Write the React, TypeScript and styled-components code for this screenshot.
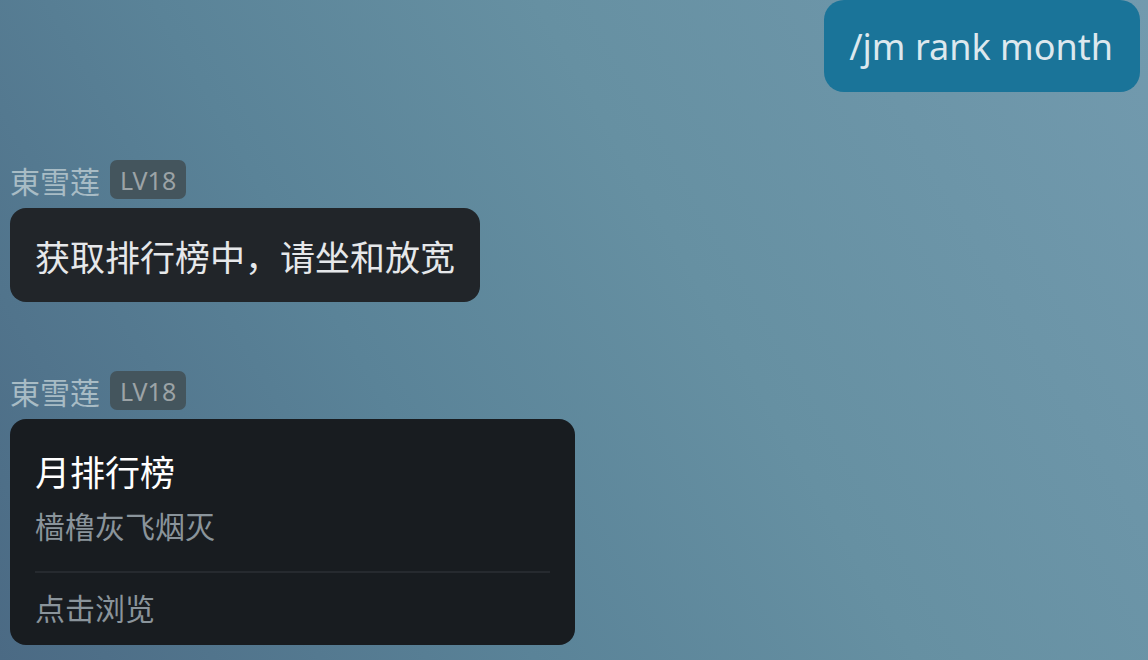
import React from "react";
import styled, { createGlobalStyle } from "styled-components";

const Global = createGlobalStyle`
  html, body { margin: 0; padding: 0; }
  body {
    width: 1148px;
    height: 660px;
    overflow: hidden;
    font-family: "Noto Sans", "Noto Sans CJK SC", sans-serif;
    background: linear-gradient(60deg, #4b6a84 0%, #5a8398 35%, #6690a2 60%, #729aae 100%);
  }
`;

const Page = styled.div`
  width: 1148px;
  height: 660px;
  display: flex;
  flex-direction: column;
  box-sizing: border-box;
  padding: 0 8px 0 10px;
`;

const OutRow = styled.div`
  display: flex;
  justify-content: flex-end;
`;

const OutBubble = styled.div`
  height: 92px;
  box-sizing: border-box;
  padding: 0 27px 0 25px;
  display: flex;
  align-items: center;
  background: #1a7499;
  color: #dde8ee;
  font-size: 36px;
  border-radius: 20px;
`;

const InGroup = styled.div<{ $top: number }>`
  display: flex;
  flex-direction: column;
  align-items: flex-start;
  gap: 9px;
  margin-top: ${(p) => p.$top}px;
`;

const NameRow = styled.div`
  display: flex;
  align-items: center;
  gap: 10px;
  height: 39px;
`;

const Name = styled.span`
  font-family: "Noto Sans CJK SC", sans-serif;
  font-size: 30px;
  color: #a8bcc5;
  line-height: 1;
`;

const Badge = styled.span`
  height: 39px;
  box-sizing: border-box;
  padding: 0 10px;
  display: flex;
  align-items: center;
  border-radius: 7px;
  background: #44555d;
  color: #9ca3a6;
  font-size: 25px;
`;

const TextBubble = styled.div`
  height: 94px;
  box-sizing: border-box;
  padding: 0 25px;
  display: flex;
  align-items: center;
  background: #212529;
  color: #e6e8ea;
  border-radius: 16px;
  font-family: "Noto Sans CJK SC", sans-serif;
  font-size: 35px;
`;

const Card = styled.div`
  width: 565px;
  height: 226px;
  box-sizing: border-box;
  padding: 28px 25px 0;
  display: flex;
  flex-direction: column;
  background: #181c20;
  border-radius: 16px;
  font-family: "Noto Sans CJK SC", sans-serif;
`;

const CardTitle = styled.div`
  color: #ffffff;
  font-size: 35px;
  line-height: 48px;
`;

const CardSub = styled.div`
  color: #8a949b;
  font-size: 30px;
  line-height: 44px;
  margin-top: 8px;
`;

const Divider = styled.div`
  height: 2px;
  background: #262a2f;
  margin-top: 24px;
`;

const CardFoot = styled.div`
  color: #8a949b;
  font-size: 30px;
  line-height: 44px;
  margin-top: 12px;
`;

export default function App() {
  return (
    <>
      <Global />
      <Page>
        <OutRow>
          <OutBubble>/jm rank month</OutBubble>
        </OutRow>
        <InGroup $top={68}>
          <NameRow>
            <Name>東雪莲</Name>
            <Badge>LV18</Badge>
          </NameRow>
          <TextBubble>获取排行榜中，请坐和放宽</TextBubble>
        </InGroup>
        <InGroup $top={69}>
          <NameRow>
            <Name>東雪莲</Name>
            <Badge>LV18</Badge>
          </NameRow>
          <Card>
            <CardTitle>月排行榜</CardTitle>
            <CardSub>樯橹灰飞烟灭</CardSub>
            <Divider />
            <CardFoot>点击浏览</CardFoot>
          </Card>
        </InGroup>
      </Page>
    </>
  );
}
